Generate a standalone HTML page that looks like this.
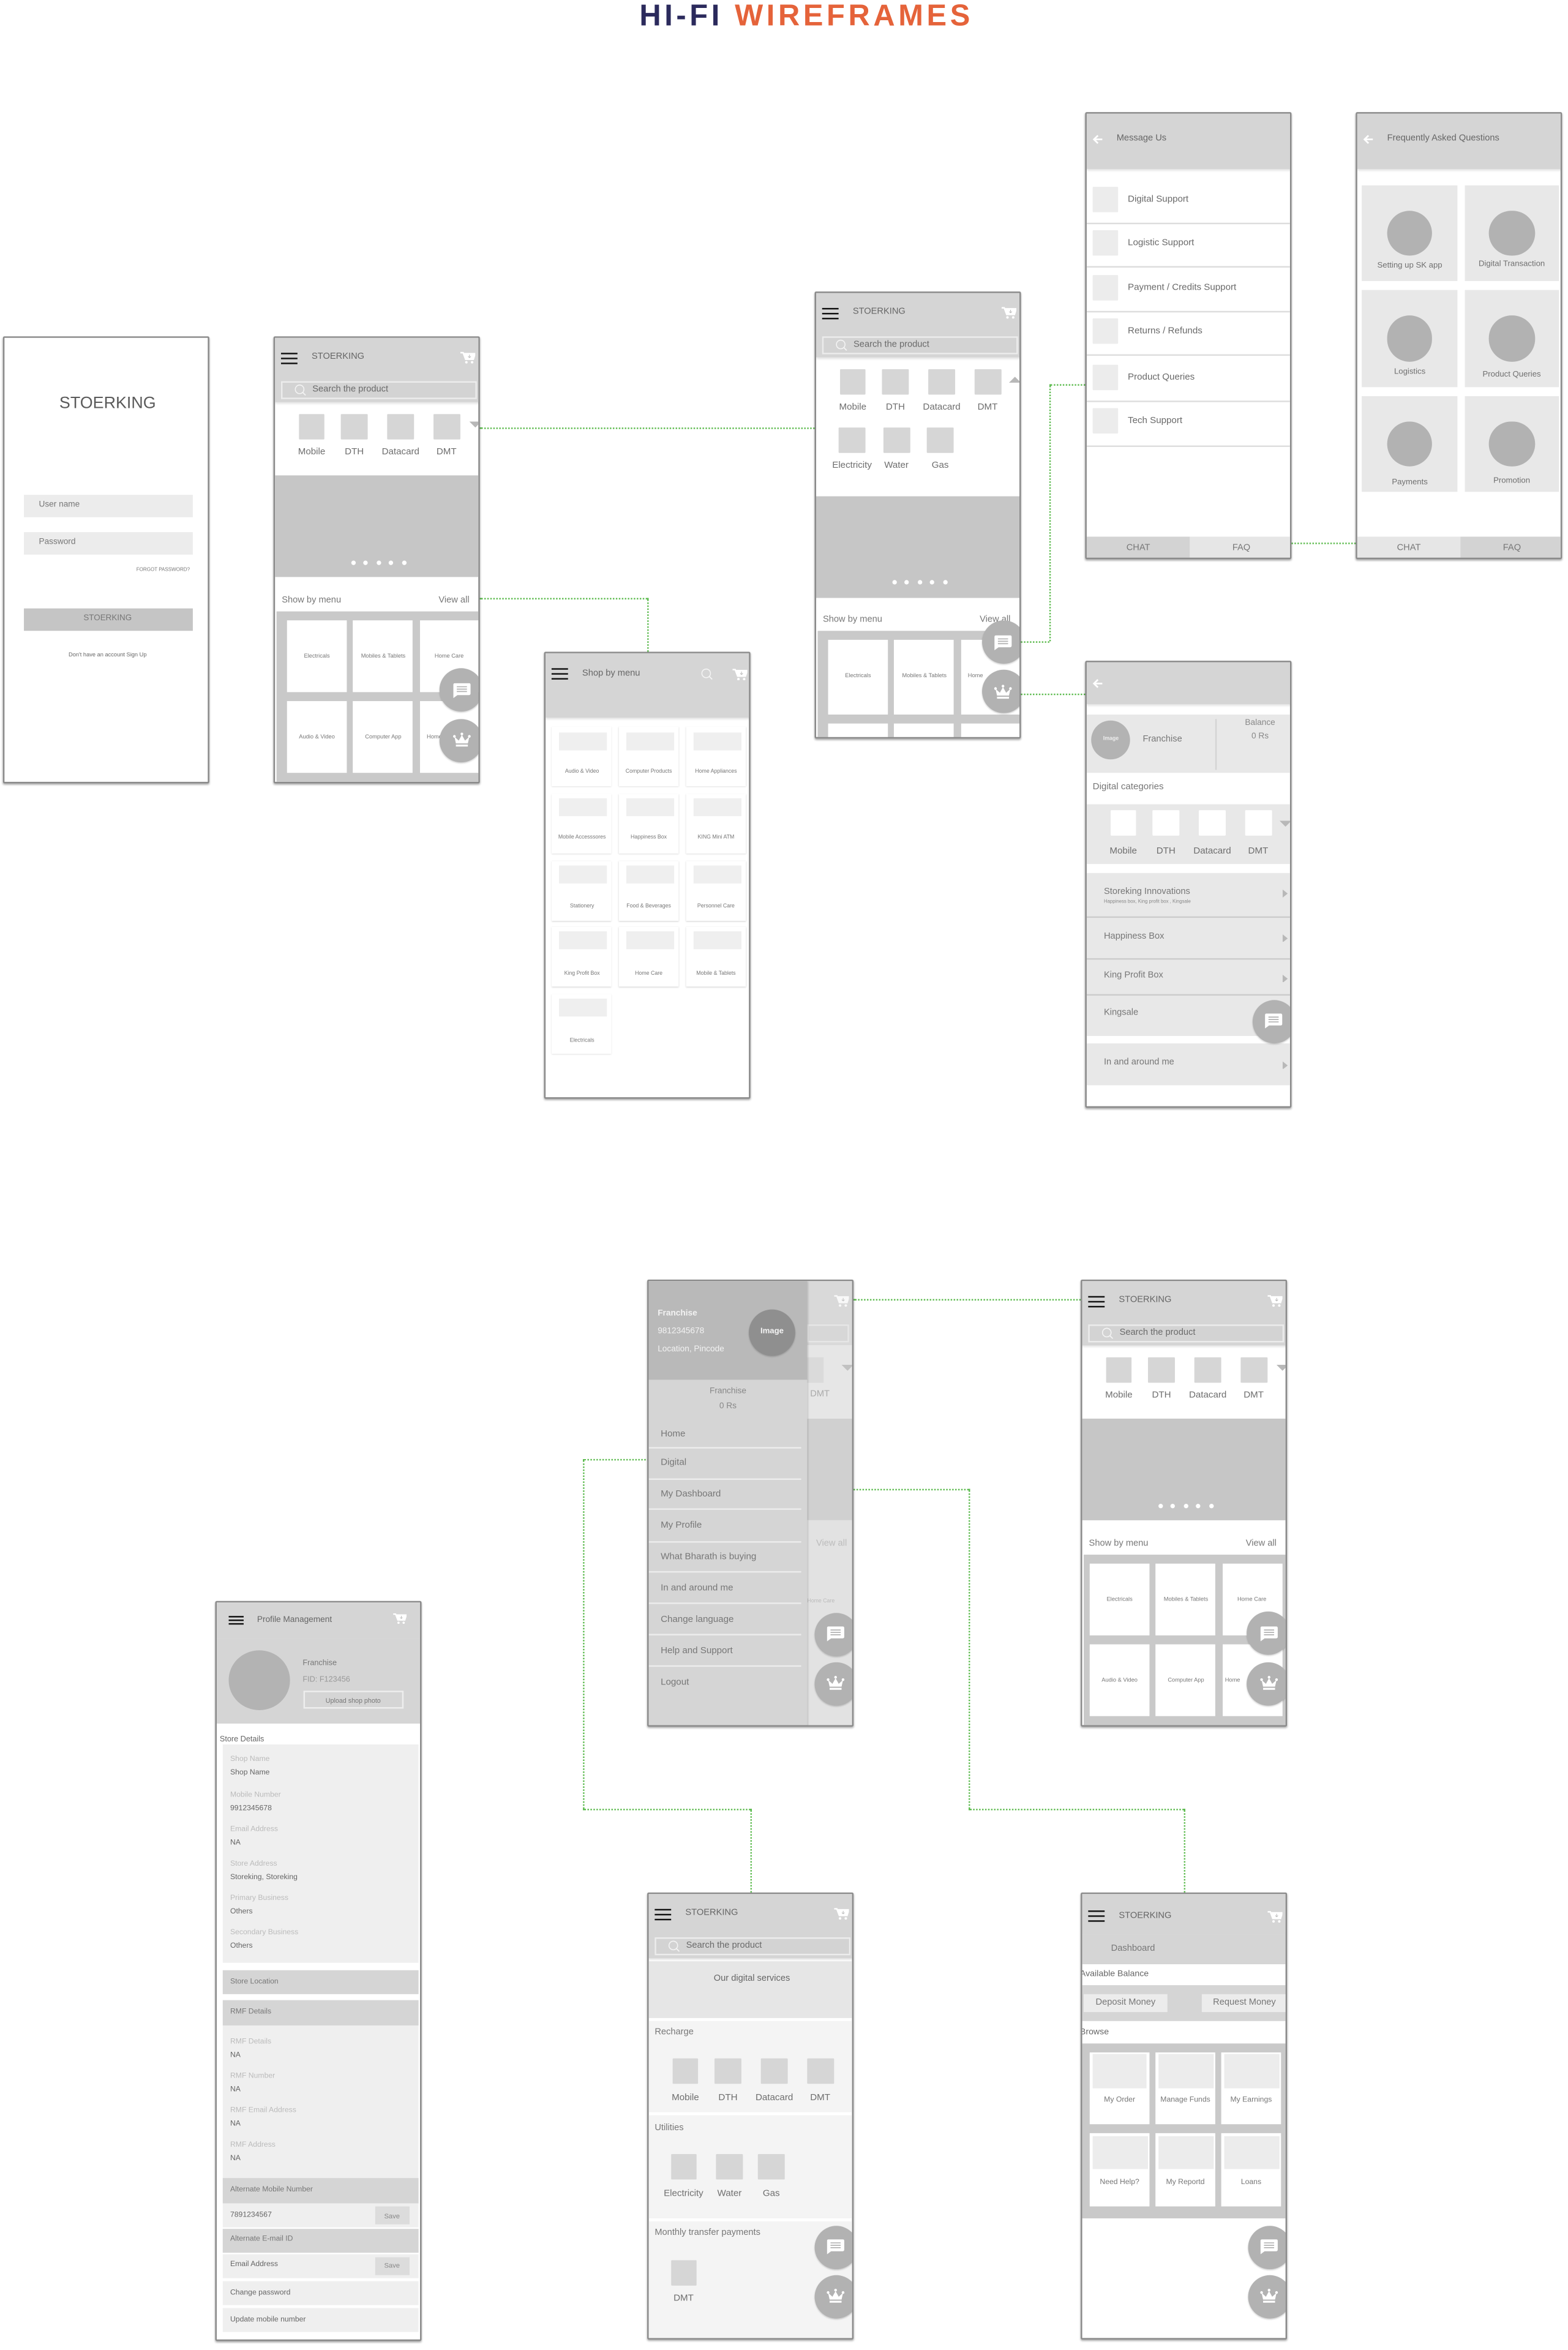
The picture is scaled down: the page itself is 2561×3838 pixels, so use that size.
<!DOCTYPE html>
<html><head><meta charset="utf-8">
<style>
*{box-sizing:border-box;margin:0;padding:0}
html,body{width:2561px;height:3836px;background:#fff;overflow:hidden}
#w{position:absolute;left:0;top:0;width:1049px;height:1572px;transform:scale(2.4414);transform-origin:0 0;font-family:"Liberation Sans",sans-serif;color:#707070}
.a{position:absolute;white-space:nowrap}
.s{position:absolute;width:138px;height:299px;background:#fff;border:0.5px solid #8a8a8a;box-shadow:0 0.8px 1.2px rgba(0,0,0,.35);overflow:hidden;border-radius:1px}
.hdr{position:absolute;left:0;top:0;width:138px;height:43px;background:#d5d5d5;box-shadow:0 1px 1.5px rgba(0,0,0,.12)}
.hb{position:absolute;left:4px;top:9.5px;width:10.5px;height:0.9px;background:#111;box-shadow:0 3.3px 0 #111,0 6.6px 0 #111}
.tt{position:absolute;font-size:6px;color:#666;top:10px;left:24.5px;white-space:nowrap}
.srch{position:absolute;left:4px;top:28.5px;width:130.5px;height:12px;border:0.5px solid #ececec;background:#d3d3d3}
.srch span{position:absolute;left:20px;top:2px;font-size:6px;color:#6a6a6a;white-space:nowrap}
.sq{position:absolute;width:17.5px;height:17px;background:#d6d6d6;border-radius:.5px}
.lb{position:absolute;width:34px;text-align:center;font-size:6.2px;color:#6e6e6e;white-space:nowrap}
.ban{position:absolute;left:0;top:92px;width:138px;height:68px;background:#c6c6c6}
.dot{position:absolute;top:148.5px;width:3px;height:3px;border-radius:50%;background:#fff}
.grid{position:absolute;left:0.5px;top:183px;width:137px;height:120px;background:#c9c9c9}
.tile{position:absolute;background:#fff;font-size:3.8px;color:#777;text-align:center;white-space:nowrap}
.fab{position:absolute;width:29px;height:29px;border-radius:50%;background:#b2b2b2;box-shadow:0 .6px 1px rgba(0,0,0,.2)}
.fab svg{position:absolute;left:8.5px;top:9.5px;width:12px;height:10px}
.cart{position:absolute;width:10px;height:8.5px}
.g{position:absolute;border-color:#5dbb4f;border-style:dotted;border-width:0}
.h{border-top-width:.55px}
.v{border-left-width:.55px}
.row{position:absolute;font-size:6.2px;color:#6a6a6a;white-space:nowrap}
.st{font-size:3.6px}
</style></head><body><div id="w">

<div class="a" style="left:0;width:1079px;top:0px;text-align:center;font-size:20px;font-weight:bold;letter-spacing:2.3px"><span style="color:#2b2a5c">HI-FI </span><span style="color:#e5633a">WIREFRAMES</span></div>

<div class="g h" style="left:321px;top:286px;width:224px"></div>
<div class="g h" style="left:321px;top:400px;width:112px"></div>
<div class="g v" style="left:433px;top:400px;height:36px"></div>
<div class="g h" style="left:683px;top:429px;width:19px"></div>
<div class="g v" style="left:702px;top:257px;height:172px"></div>
<div class="g h" style="left:702px;top:257px;width:24px"></div>
<div class="g h" style="left:683px;top:464px;width:43px"></div>
<div class="g h" style="left:864px;top:363px;width:43px"></div>
<div class="g h" style="left:571px;top:869px;width:152px"></div>
<div class="g h" style="left:390px;top:976px;width:50px"></div>
<div class="g v" style="left:390px;top:976px;height:234px"></div>
<div class="g h" style="left:390px;top:1210px;width:112px"></div>
<div class="g v" style="left:502px;top:1210px;height:56px"></div>
<div class="g h" style="left:539px;top:996px;width:109px"></div>
<div class="g v" style="left:648px;top:996px;height:214px"></div>
<div class="g h" style="left:648px;top:1210px;width:144px"></div>
<div class="g v" style="left:792px;top:1210px;height:56px"></div>

<svg width="0" height="0" style="position:absolute">
<defs>
<symbol id="cart" viewBox="0 0 12 10"><path d="M0 1h2.2l2 5.3h6.2l1.4-4.5H3" fill="none" stroke="#fff" stroke-width="1.2"/><path d="M2.9 1.8h8.9l-1.4 4.5H4.3z" fill="#fff"/><path d="M7.3 2.6v2.4M6.2 4l1.1 1 1.1-1" stroke="#bbb" stroke-width=".5" fill="none"/><circle cx="4.8" cy="8.7" r="1" fill="#fff"/><circle cx="9.4" cy="8.7" r="1" fill="#fff"/></symbol>
<symbol id="chat" viewBox="0 0 12 10"><path d="M1.2 0h9.6a1 1 0 0 1 1 1v6a1 1 0 0 1-1 1H3L.3 10V1a1 1 0 0 1 .9-1z" fill="#fff"/><path d="M2.6 2.4h6.8M2.6 4h6.8M2.6 5.6h6.8" stroke="#b2b2b2" stroke-width=".7"/></symbol>
<symbol id="crown" viewBox="0 0 12 10"><circle cx="1" cy="2.6" r=".9" fill="#fff"/><circle cx="6" cy="1" r=".9" fill="#fff"/><circle cx="11" cy="2.6" r=".9" fill="#fff"/><path d="M1 2.8l2.9 2.6L6 1.6l2.1 3.8L11 2.8 10 7.3H2z" fill="#fff"/><rect x="2" y="8.1" width="8" height="1.3" fill="#fff"/></symbol>
<symbol id="mag" viewBox="0 0 10 10"><circle cx="4.3" cy="4.3" r="3.6" fill="none" stroke="#f4f4f4" stroke-width=".8"/><path d="M6.9 6.9l2.4 2.4" stroke="#f4f4f4" stroke-width=".9"/></symbol>
<symbol id="back" viewBox="0 0 10 9"><path d="M5 .8L1.2 4.5 5 8.2M1.2 4.5h8" fill="none" stroke="#fff" stroke-width="1.6"/></symbol>
<symbol id="tri" viewBox="0 0 10 5"><path d="M0 0h10L5 5z" fill="#b8b8b8"/></symbol>
<symbol id="rtri" viewBox="0 0 5 8"><path d="M0 0l5 4-5 4z" fill="#b8b8b8"/></symbol>
</defs></svg>

<!-- LOGIN -->
<div class="s" style="left:2px;top:225px">
<div class="a" style="left:0;width:138px;text-align:center;top:38px;font-size:11px;color:#5a5a5a">STOERKING</div>
<div class="a" style="left:12.5px;top:105px;width:113px;height:15px;background:#ececec;font-size:5.6px;color:#777;padding:4.2px 0 0 10.5px">User name</div>
<div class="a" style="left:12.5px;top:130px;width:113px;height:15px;background:#ececec;font-size:5.6px;color:#777;padding:4.2px 0 0 10.5px">Password</div>
<div class="a" style="right:12px;top:153px;font-size:3.3px;color:#777">FORGOT PASSWORD?</div>
<div class="a" style="left:12.5px;top:181px;width:113px;height:15px;background:#c5c5c5;font-size:5.5px;color:#777;text-align:center;padding-top:4.2px">STOERKING</div>
<div class="a" style="left:0;width:138px;text-align:center;top:209.5px;font-size:3.8px;color:#666">Don't have an account Sign Up</div>
</div>

<!-- HOME 1 -->
<div class="s" style="left:183px;top:225px">
<div class="hdr"></div><div class="hb"></div><div class="tt">STOERKING</div>
<svg class="cart" style="left:124px;top:9px"><use href="#cart"/></svg>
<div class="srch"><svg class="a" style="left:8px;top:1.5px;width:8px;height:8px"><use href="#mag"/></svg><span>Search the product</span></div>
<div class="sq" style="left:15.7px;top:51px"></div><div class="sq" style="left:44.3px;top:51px"></div><div class="sq" style="left:75.3px;top:51px"></div><div class="sq" style="left:106px;top:51px"></div>
<div class="lb" style="left:7.5px;top:72.5px">Mobile</div><div class="lb" style="left:36px;top:72.5px">DTH</div><div class="lb" style="left:67px;top:72.5px">Datacard</div><div class="lb" style="left:97.7px;top:72.5px">DMT</div>
<svg class="a" style="left:129.5px;top:56px;width:8px;height:4px"><use href="#tri"/></svg>
<div class="ban"></div>
<div class="dot" style="left:50.9px"></div><div class="dot" style="left:59.3px"></div><div class="dot" style="left:67.8px"></div><div class="dot" style="left:76.3px"></div><div class="dot" style="left:84.8px"></div>
<div class="a" style="left:4.5px;top:172.5px;font-size:6px;color:#777">Show by menu</div>
<div class="a" style="right:6px;top:172.5px;font-size:6px;color:#777">View all</div>
<div class="grid"></div>
<div class="tile" style="left:8px;top:189px;width:40px;height:48px;padding-top:21.5px">Electricals</div>
<div class="tile" style="left:52.4px;top:189px;width:40px;height:48px;padding-top:21.5px">Mobiles &amp; Tablets</div>
<div class="tile" style="left:96.5px;top:189px;width:40px;height:48px;padding-top:21.5px">Home Care</div>
<div class="tile" style="left:8px;top:243px;width:40px;height:48px;padding-top:21.5px">Audio &amp; Video</div>
<div class="tile" style="left:52.4px;top:243px;width:40px;height:48px;padding-top:21.5px">Computer App</div>
<div class="tile" style="left:96.5px;top:243px;width:40px;height:48px;padding-top:21.5px;text-align:left;padding-left:5px">Home</div>
<div class="fab" style="left:110px;top:221px"><svg><use href="#chat"/></svg></div>
<div class="fab" style="left:110px;top:254.5px"><svg><use href="#crown"/></svg></div>
</div>

<!-- SHOP BY MENU -->
<div class="s" style="left:364px;top:436px">
<div class="hdr"></div><div class="hb"></div><div class="tt" style="top:10.5px">Shop by menu</div>
<svg class="a" style="left:104px;top:9.5px;width:8px;height:8px"><use href="#mag"/></svg>
<svg class="cart" style="left:124.5px;top:9.5px"><use href="#cart"/></svg>
<div class="tile" style="left:4.4px;top:49px;width:40px;height:40px;box-shadow:0 .4px 1px rgba(0,0,0,.18)"><div class="a" style="left:4.5px;top:4px;width:32px;height:12px;background:#efefef"></div><div class="a st" style="left:0;width:40px;top:28px">Audio &amp; Video</div></div>
<div class="tile" style="left:49px;top:49px;width:40px;height:40px;box-shadow:0 .4px 1px rgba(0,0,0,.18)"><div class="a" style="left:4.5px;top:4px;width:32px;height:12px;background:#efefef"></div><div class="a st" style="left:0;width:40px;top:28px">Computer Products</div></div>
<div class="tile" style="left:94px;top:49px;width:40px;height:40px;box-shadow:0 .4px 1px rgba(0,0,0,.18)"><div class="a" style="left:4.5px;top:4px;width:32px;height:12px;background:#efefef"></div><div class="a st" style="left:0;width:40px;top:28px">Home Appliances</div></div>
<div class="tile" style="left:4.4px;top:94px;width:40px;height:40px;box-shadow:0 .4px 1px rgba(0,0,0,.18)"><div class="a" style="left:4.5px;top:2.5px;width:32px;height:12px;background:#efefef"></div><div class="a st" style="left:0;width:40px;top:27px">Mobile Accesssores</div></div>
<div class="tile" style="left:49px;top:94px;width:40px;height:40px;box-shadow:0 .4px 1px rgba(0,0,0,.18)"><div class="a" style="left:4.5px;top:2.5px;width:32px;height:12px;background:#efefef"></div><div class="a st" style="left:0;width:40px;top:27px">Happiness Box</div></div>
<div class="tile" style="left:94px;top:94px;width:40px;height:40px;box-shadow:0 .4px 1px rgba(0,0,0,.18)"><div class="a" style="left:4.5px;top:2.5px;width:32px;height:12px;background:#efefef"></div><div class="a st" style="left:0;width:40px;top:27px">KING Mini ATM</div></div>
<div class="tile" style="left:4.4px;top:138.5px;width:40px;height:40px;box-shadow:0 .4px 1px rgba(0,0,0,.18)"><div class="a" style="left:4.5px;top:3px;width:32px;height:12px;background:#efefef"></div><div class="a st" style="left:0;width:40px;top:28px">Stationery</div></div>
<div class="tile" style="left:49px;top:138.5px;width:40px;height:40px;box-shadow:0 .4px 1px rgba(0,0,0,.18)"><div class="a" style="left:4.5px;top:3px;width:32px;height:12px;background:#efefef"></div><div class="a st" style="left:0;width:40px;top:28px">Food &amp; Beverages</div></div>
<div class="tile" style="left:94px;top:138.5px;width:40px;height:40px;box-shadow:0 .4px 1px rgba(0,0,0,.18)"><div class="a" style="left:4.5px;top:3px;width:32px;height:12px;background:#efefef"></div><div class="a st" style="left:0;width:40px;top:28px">Personnel Care</div></div>
<div class="tile" style="left:4.4px;top:183px;width:40px;height:40px;box-shadow:0 .4px 1px rgba(0,0,0,.18)"><div class="a" style="left:4.5px;top:2.5px;width:32px;height:12px;background:#efefef"></div><div class="a st" style="left:0;width:40px;top:29px">King Profit Box</div></div>
<div class="tile" style="left:49px;top:183px;width:40px;height:40px;box-shadow:0 .4px 1px rgba(0,0,0,.18)"><div class="a" style="left:4.5px;top:2.5px;width:32px;height:12px;background:#efefef"></div><div class="a st" style="left:0;width:40px;top:29px">Home Care</div></div>
<div class="tile" style="left:94px;top:183px;width:40px;height:40px;box-shadow:0 .4px 1px rgba(0,0,0,.18)"><div class="a" style="left:4.5px;top:2.5px;width:32px;height:12px;background:#efefef"></div><div class="a st" style="left:0;width:40px;top:29px">Mobile &amp; Tablets</div></div>
<div class="tile" style="left:4.4px;top:228px;width:40px;height:40px;box-shadow:0 .4px 1px rgba(0,0,0,.18)"><div class="a" style="left:4.5px;top:2.5px;width:32px;height:12px;background:#efefef"></div><div class="a st" style="left:0;width:40px;top:29px">Electricals</div></div>
</div>

<!-- HOME 2 expanded -->
<div class="s" style="left:545px;top:195px">
<div class="hdr"></div><div class="hb"></div><div class="tt">STOERKING</div>
<svg class="cart" style="left:124px;top:9px"><use href="#cart"/></svg>
<div class="srch"><svg class="a" style="left:8px;top:1.5px;width:8px;height:8px"><use href="#mag"/></svg><span>Search the product</span></div>
<div class="sq" style="left:15.7px;top:51px"></div><div class="sq" style="left:44.3px;top:51px"></div><div class="sq" style="left:75.3px;top:51px"></div><div class="sq" style="left:106px;top:51px"></div>
<div class="lb" style="left:7.5px;top:72.5px">Mobile</div><div class="lb" style="left:36px;top:72.5px">DTH</div><div class="lb" style="left:67px;top:72.5px">Datacard</div><div class="lb" style="left:97.7px;top:72.5px">DMT</div>
<svg class="a" style="left:129px;top:56px;width:8px;height:4px;transform:rotate(180deg)"><use href="#tri"/></svg>
<div class="sq" style="left:15px;top:90px"></div><div class="sq" style="left:45px;top:90px"></div><div class="sq" style="left:74px;top:90px"></div>
<div class="lb" style="left:7px;top:112px">Electricity</div><div class="lb" style="left:36.7px;top:112px">Water</div><div class="lb" style="left:66px;top:112px">Gas</div>
<div class="ban" style="top:136px"></div>
<div class="dot" style="left:50.9px;top:191.5px"></div><div class="dot" style="left:59.3px;top:191.5px"></div><div class="dot" style="left:67.8px;top:191.5px"></div><div class="dot" style="left:76.3px;top:191.5px"></div><div class="dot" style="left:84.8px;top:191.5px"></div>
<div class="a" style="left:4.5px;top:215.5px;font-size:6px;color:#777">Show by menu</div>
<div class="a" style="right:6px;top:215.5px;font-size:6px;color:#777">View all</div>
<div class="grid" style="top:226px"></div>
<div class="tile" style="left:8px;top:232px;width:40px;height:50px;padding-top:22px">Electricals</div>
<div class="tile" style="left:52.4px;top:232px;width:40px;height:50px;padding-top:22px">Mobiles &amp; Tablets</div>
<div class="tile" style="left:96.5px;top:232px;width:40px;height:50px;padding-top:22px;text-align:left;padding-left:5px">Home</div>
<div class="tile" style="left:8px;top:288px;width:40px;height:20px"></div>
<div class="tile" style="left:52.4px;top:288px;width:40px;height:20px"></div>
<div class="tile" style="left:96.5px;top:288px;width:40px;height:20px"></div>
<div class="fab" style="left:110.5px;top:219px"><svg><use href="#chat"/></svg></div>
<div class="fab" style="left:110.5px;top:252px"><svg><use href="#crown"/></svg></div>
</div>

<!-- MESSAGE US -->
<div class="s" style="left:726px;top:75px">
<div class="hdr" style="height:36.5px"></div>
<svg class="a" style="left:3.5px;top:14px;width:7px;height:6.5px"><use href="#back"/></svg>
<div class="a" style="left:20px;top:14.3px;font-size:6px;color:#666">Message Us</div>
<div class="sq" style="left:3.8px;top:49px;background:#ececec"></div><div class="row" style="left:27.5px;top:54px">Digital Support</div><div class="a" style="left:0;top:72.5px;width:138px;height:.6px;background:#ddd"></div>
<div class="sq" style="left:3.8px;top:78px;background:#ececec"></div><div class="row" style="left:27.5px;top:83px">Logistic Support</div><div class="a" style="left:0;top:102px;width:138px;height:.6px;background:#ddd"></div>
<div class="sq" style="left:3.8px;top:107.5px;background:#ececec"></div><div class="row" style="left:27.5px;top:112.5px">Payment / Credits Support</div><div class="a" style="left:0;top:131.5px;width:138px;height:.6px;background:#ddd"></div>
<div class="sq" style="left:3.8px;top:137px;background:#ececec"></div><div class="row" style="left:27.5px;top:141.5px">Returns / Refunds</div><div class="a" style="left:0;top:161px;width:138px;height:.6px;background:#ddd"></div>
<div class="sq" style="left:3.8px;top:168px;background:#ececec"></div><div class="row" style="left:27.5px;top:172.5px">Product Queries</div><div class="a" style="left:0;top:192px;width:138px;height:.6px;background:#ddd"></div>
<div class="sq" style="left:3.8px;top:197px;background:#ececec"></div><div class="row" style="left:27.5px;top:202px">Tech Support</div><div class="a" style="left:0;top:221.5px;width:138px;height:.6px;background:#ddd"></div>
<div class="a" style="left:0;top:283px;width:69px;height:17px;background:#d3d3d3;font-size:6px;text-align:center;padding-top:5px;color:#777">CHAT</div>
<div class="a" style="left:69px;top:283px;width:69px;height:17px;background:#e6e6e6;font-size:6px;text-align:center;padding-top:5px;color:#777">FAQ</div>
</div>

<!-- FAQ -->
<div class="s" style="left:907px;top:75px">
<div class="hdr" style="height:36.5px"></div>
<svg class="a" style="left:3.5px;top:14px;width:7px;height:6.5px"><use href="#back"/></svg>
<div class="a" style="left:20px;top:14.3px;font-size:6px;color:#666">Frequently Asked Questions</div>
<div class="a" style="left:3.4px;top:47.5px;width:63.5px;height:64.5px;background:#e8e8e8"><div class="a" style="left:16.5px;top:17px;width:30.5px;height:30.5px;border-radius:50%;background:#b2b2b2"></div><div class="a" style="left:0;width:63.5px;text-align:center;top:51.5px;font-size:5.4px">Setting up SK app</div></div>
<div class="a" style="left:71.6px;top:47.5px;width:63.5px;height:64.5px;background:#e8e8e8"><div class="a" style="left:16.5px;top:17px;width:30.5px;height:30.5px;border-radius:50%;background:#b2b2b2"></div><div class="a" style="left:0;width:63.5px;text-align:center;top:50.5px;font-size:5.4px">Digital Transaction</div></div>
<div class="a" style="left:3.4px;top:118px;width:63.5px;height:64.5px;background:#e8e8e8"><div class="a" style="left:16.5px;top:17px;width:30.5px;height:30.5px;border-radius:50%;background:#b2b2b2"></div><div class="a" style="left:0;width:63.5px;text-align:center;top:51.5px;font-size:5.4px">Logistics</div></div>
<div class="a" style="left:71.6px;top:118px;width:63.5px;height:64.5px;background:#e8e8e8"><div class="a" style="left:16.5px;top:17px;width:30.5px;height:30.5px;border-radius:50%;background:#b2b2b2"></div><div class="a" style="left:0;width:63.5px;text-align:center;top:54px;font-size:5.4px">Product Queries</div></div>
<div class="a" style="left:3.4px;top:188.5px;width:63.5px;height:64.5px;background:#e8e8e8"><div class="a" style="left:16.5px;top:17px;width:30.5px;height:30.5px;border-radius:50%;background:#b2b2b2"></div><div class="a" style="left:0;width:63.5px;text-align:center;top:55px;font-size:5.4px">Payments</div></div>
<div class="a" style="left:71.6px;top:188.5px;width:63.5px;height:64.5px;background:#e8e8e8"><div class="a" style="left:16.5px;top:17px;width:30.5px;height:30.5px;border-radius:50%;background:#b2b2b2"></div><div class="a" style="left:0;width:63.5px;text-align:center;top:54.5px;font-size:5.4px">Promotion</div></div>
<div class="a" style="left:0;top:283px;width:69px;height:17px;background:#e6e6e6;font-size:6px;text-align:center;padding-top:5px;color:#777">CHAT</div>
<div class="a" style="left:69px;top:283px;width:69px;height:17px;background:#d3d3d3;font-size:6px;text-align:center;padding-top:5px;color:#777">FAQ</div>
</div>

<!-- DIGITAL PROFILE -->
<div class="s" style="left:726px;top:442px">
<div class="hdr" style="height:28px"></div>
<svg class="a" style="left:3.5px;top:11px;width:7px;height:6.5px"><use href="#back"/></svg>
<div class="a" style="left:0;top:35px;width:138px;height:38.5px;background:#e8e8e8"></div>
<div class="a" style="left:3.3px;top:39px;width:25.8px;height:26px;border-radius:50%;background:#b3b3b3;font-size:3.6px;color:#eee;text-align:center;padding-top:10px;font-weight:bold">Image</div>
<div class="a" style="left:37.5px;top:48.5px;font-size:6px;color:#777">Franchise</div>
<div class="a" style="left:86px;top:38px;width:.5px;height:34px;background:#d4d4d4"></div>
<div class="a" style="left:96px;width:40px;text-align:center;top:37.5px;font-size:5.6px;color:#888">Balance</div>
<div class="a" style="left:96px;width:40px;text-align:center;top:46.5px;font-size:5.6px;color:#888">0 Rs</div>
<div class="a" style="left:4px;top:79.5px;font-size:6.2px;color:#777">Digital categories</div>
<div class="a" style="left:0;top:95px;width:138px;height:39.5px;background:#e8e8e8"></div>
<div class="sq" style="left:15.7px;top:99px;background:#fff"></div><div class="sq" style="left:44.3px;top:99px;background:#fff"></div><div class="sq" style="left:75.3px;top:99px;background:#fff"></div><div class="sq" style="left:106px;top:99px;background:#fff"></div>
<div class="lb" style="left:7.5px;top:122.5px">Mobile</div><div class="lb" style="left:36px;top:122.5px">DTH</div><div class="lb" style="left:67px;top:122.5px">Datacard</div><div class="lb" style="left:97.7px;top:122.5px">DMT</div>
<svg class="a" style="left:129px;top:105.5px;width:8px;height:4px"><use href="#tri"/></svg>
<div class="a" style="left:0;top:141px;width:138px;height:109px;background:#e8e8e8"></div>
<div class="a" style="left:0;top:170px;width:138px;height:.6px;background:#ccc"></div>
<div class="a" style="left:0;top:198px;width:138px;height:.6px;background:#ccc"></div>
<div class="a" style="left:0;top:222px;width:138px;height:.6px;background:#ccc"></div>
<div class="a" style="left:11.5px;top:150.5px;font-size:6px;color:#777">Storeking Innovations</div>
<div class="a" style="left:11.5px;top:158.3px;font-size:3.2px;color:#888">Happiness box, King profit box , Kingsale</div>
<div class="a" style="left:11.5px;top:180.5px;font-size:6px;color:#777">Happiness Box</div>
<div class="a" style="left:11.5px;top:207px;font-size:6px;color:#777">King Profit Box</div>
<div class="a" style="left:11.5px;top:232px;font-size:6px;color:#777">Kingsale</div>
<div class="a" style="left:0;top:255px;width:138px;height:27.5px;background:#e8e8e8"></div>
<div class="a" style="left:11.5px;top:265px;font-size:6px;color:#777">In and around me</div>
<svg class="a" style="left:131px;top:152px;width:3.5px;height:5.5px"><use href="#rtri"/></svg>
<svg class="a" style="left:131px;top:181.5px;width:3.5px;height:5.5px"><use href="#rtri"/></svg>
<svg class="a" style="left:131px;top:208.5px;width:3.5px;height:5.5px"><use href="#rtri"/></svg>
<svg class="a" style="left:131px;top:266.5px;width:3.5px;height:5.5px"><use href="#rtri"/></svg>
<div class="fab" style="left:110.5px;top:225.5px"><svg><use href="#chat"/></svg></div>
</div>

<!-- DRAWER -->
<div class="s" style="left:433px;top:856px">
<div class="a" style="left:0;top:0;width:138px;height:43px;background:#d9d9d9"></div>
<svg class="cart" style="left:124px;top:9px;opacity:.8"><use href="#cart"/></svg>
<div class="a" style="left:106px;top:28.5px;width:28px;height:12px;border:.5px solid #e6e6e6;background:#d7d7d7"></div>
<div class="a" style="left:106px;top:43px;width:32px;height:49px;background:#e6e6e6"></div>
<div class="a" style="left:106px;top:51px;width:11px;height:17px;background:#dadada"></div>
<svg class="a" style="left:129px;top:56px;width:8px;height:4px;opacity:.8"><use href="#tri"/></svg>
<div class="a" style="left:108px;top:72.5px;font-size:6px;color:#aaa">DMT</div>
<div class="a" style="left:106px;top:92px;width:32px;height:68px;background:#d0d0d0"></div>
<div class="a" style="left:106px;top:160px;width:32px;height:140px;background:#e2e2e2"></div>
<div class="a" style="left:112px;top:172.5px;font-size:6px;color:#bbb">View all</div>
<div class="a" style="left:106px;top:212px;font-size:3.6px;color:#bbb">Home Care</div>
<div class="fab" style="left:110.5px;top:221.5px"><svg><use href="#chat"/></svg></div>
<div class="fab" style="left:110.5px;top:254.5px"><svg><use href="#crown"/></svg></div>
<div class="a" style="left:0;top:0;width:106px;height:300px;background:#d5d5d5;box-shadow:.6px 0 1px rgba(0,0,0,.15)"></div>
<div class="a" style="left:0;top:0;width:106px;height:66px;background:#b9b9b9"></div>
<div class="a" style="left:6px;top:18.5px;font-size:5.6px;color:#f2f2f2;font-weight:bold">Franchise</div>
<div class="a" style="left:6px;top:30.5px;font-size:5.6px;color:#f2f2f2">9812345678</div>
<div class="a" style="left:6px;top:42.5px;font-size:5.6px;color:#f2f2f2">Location, Pincode</div>
<div class="a" style="left:67px;top:19px;width:31px;height:31px;border-radius:50%;background:#8f8f8f;font-size:5.4px;color:#f4f4f4;font-weight:bold;text-align:center;padding-top:12px;box-shadow:0 .6px 1px rgba(0,0,0,.2)">Image</div>
<div class="a" style="left:0;width:106px;text-align:center;top:70.5px;font-size:5.6px;color:#888">Franchise</div>
<div class="a" style="left:0;width:106px;text-align:center;top:80.5px;font-size:5.6px;color:#888">0 Rs</div>
<div class="a" style="left:8px;top:98.5px;font-size:6.2px;color:#777">Home</div>
<div class="a" style="left:8px;top:117.5px;font-size:6.2px;color:#777">Digital</div>
<div class="a" style="left:8px;top:138.5px;font-size:6.2px;color:#777">My Dashboard</div>
<div class="a" style="left:8px;top:159.5px;font-size:6.2px;color:#777">My Profile</div>
<div class="a" style="left:8px;top:180.5px;font-size:6.2px;color:#777">What Bharath is buying</div>
<div class="a" style="left:8px;top:201.5px;font-size:6.2px;color:#777">In and around me</div>
<div class="a" style="left:8px;top:222.5px;font-size:6.2px;color:#777">Change language</div>
<div class="a" style="left:8px;top:243.5px;font-size:6.2px;color:#777">Help and Support</div>
<div class="a" style="left:8px;top:264.5px;font-size:6.2px;color:#777">Logout</div>
<div class="a" style="left:0;top:111px;width:102px;height:.6px;background:#ececec"></div>
<div class="a" style="left:0;top:131.5px;width:102px;height:.6px;background:#ececec"></div>
<div class="a" style="left:0;top:152px;width:102px;height:.6px;background:#ececec"></div>
<div class="a" style="left:0;top:173.5px;width:102px;height:.6px;background:#ececec"></div>
<div class="a" style="left:0;top:194px;width:102px;height:.6px;background:#ececec"></div>
<div class="a" style="left:0;top:215px;width:102px;height:.6px;background:#ececec"></div>
<div class="a" style="left:0;top:235.5px;width:102px;height:.6px;background:#ececec"></div>
<div class="a" style="left:0;top:256.5px;width:102px;height:.6px;background:#ececec"></div>
</div>

<!-- HOME 3 -->
<div class="s" style="left:723px;top:856px">
<div class="hdr"></div><div class="hb"></div><div class="tt">STOERKING</div>
<svg class="cart" style="left:124px;top:9px"><use href="#cart"/></svg>
<div class="srch"><svg class="a" style="left:8px;top:1.5px;width:8px;height:8px"><use href="#mag"/></svg><span>Search the product</span></div>
<div class="sq" style="left:15.7px;top:51px"></div><div class="sq" style="left:44.3px;top:51px"></div><div class="sq" style="left:75.3px;top:51px"></div><div class="sq" style="left:106px;top:51px"></div>
<div class="lb" style="left:7.5px;top:72.5px">Mobile</div><div class="lb" style="left:36px;top:72.5px">DTH</div><div class="lb" style="left:67px;top:72.5px">Datacard</div><div class="lb" style="left:97.7px;top:72.5px">DMT</div>
<svg class="a" style="left:129.5px;top:56px;width:8px;height:4px"><use href="#tri"/></svg>
<div class="ban"></div>
<div class="dot" style="left:50.9px"></div><div class="dot" style="left:59.3px"></div><div class="dot" style="left:67.8px"></div><div class="dot" style="left:76.3px"></div><div class="dot" style="left:84.8px"></div>
<div class="a" style="left:4.5px;top:172.5px;font-size:6px;color:#777">Show by menu</div>
<div class="a" style="right:6px;top:172.5px;font-size:6px;color:#777">View all</div>
<div class="grid"></div>
<div class="tile" style="left:5px;top:189px;width:40px;height:48px;padding-top:21.5px">Electricals</div>
<div class="tile" style="left:49.4px;top:189px;width:40px;height:48px;padding-top:21.5px">Mobiles &amp; Tablets</div>
<div class="tile" style="left:93.5px;top:189px;width:40px;height:48px;padding-top:21.5px">Home Care</div>
<div class="tile" style="left:5px;top:243px;width:40px;height:48px;padding-top:21.5px">Audio &amp; Video</div>
<div class="tile" style="left:49.4px;top:243px;width:40px;height:48px;padding-top:21.5px">Computer App</div>
<div class="tile" style="left:93.5px;top:243px;width:40px;height:48px;padding-top:21.5px;text-align:left;padding-left:2px">Home</div>
<div class="fab" style="left:110px;top:221px"><svg><use href="#chat"/></svg></div>
<div class="fab" style="left:110px;top:254.5px"><svg><use href="#crown"/></svg></div>
</div>

<!-- PROFILE -->
<div class="s" style="left:144px;top:1071px;height:495px">
<div class="a" style="left:0;top:0;width:138px;height:24px;background:#d5d5d5;box-shadow:0 .8px 1.2px rgba(0,0,0,.15)"></div>
<div class="hb" style="left:8px;top:8.5px;width:10px;box-shadow:0 2.4px 0 #111,0 4.8px 0 #111;height:.7px"></div>
<div class="a" style="left:27px;top:8.5px;font-size:5.6px;color:#666">Profile Management</div>
<svg class="cart" style="left:118px;top:7px;width:9px;height:7.5px"><use href="#cart"/></svg>
<div class="a" style="left:0;top:24px;width:138px;height:57px;background:#d5d5d5"></div>
<div class="a" style="left:7.8px;top:32px;width:41.5px;height:40px;border-radius:50%;background:#b3b3b3"></div>
<div class="a" style="left:57.5px;top:38px;font-size:5.2px;color:#777">Franchise</div>
<div class="a" style="left:57.5px;top:49px;font-size:5.2px;color:#999">FID: F123456</div>
<div class="a" style="left:58px;top:59px;width:66.5px;height:12px;border:.5px solid #eee;font-size:4.4px;color:#777;text-align:center;padding-top:3px">Upload shop photo</div>
<div class="a" style="left:2px;top:88.5px;font-size:5.2px;color:#666">Store Details</div>
<div class="a" style="left:3.5px;top:95px;width:131.5px;height:146px;background:#efefef"></div>
<div class="a" style="left:9px;top:102px;font-size:5px;color:#bbb">Shop Name</div><div class="a" style="left:9px;top:111px;font-size:5px;color:#666">Shop Name</div>
<div class="a" style="left:9px;top:125.5px;font-size:5px;color:#bbb">Mobile Number</div><div class="a" style="left:9px;top:134.5px;font-size:5px;color:#666">9912345678</div>
<div class="a" style="left:9px;top:148.5px;font-size:5px;color:#bbb">Email Address</div><div class="a" style="left:9px;top:157.5px;font-size:5px;color:#666">NA</div>
<div class="a" style="left:9px;top:171.5px;font-size:5px;color:#bbb">Store Address</div><div class="a" style="left:9px;top:180.5px;font-size:5px;color:#666">Storeking, Storeking</div>
<div class="a" style="left:9px;top:194.5px;font-size:5px;color:#bbb">Primary Business</div><div class="a" style="left:9px;top:203.5px;font-size:5px;color:#666">Others</div>
<div class="a" style="left:9px;top:217.5px;font-size:5px;color:#bbb">Secondary Business</div><div class="a" style="left:9px;top:226.5px;font-size:5px;color:#666">Others</div>
<div class="a" style="left:3.5px;top:246px;width:131.5px;height:16px;background:#d5d5d5;font-size:5px;color:#777;padding:4.8px 0 0 5.5px">Store Location</div>
<div class="a" style="left:3.5px;top:266px;width:131.5px;height:17px;background:#d5d5d5;font-size:5px;color:#777;padding:5.2px 0 0 5.5px">RMF Details</div>
<div class="a" style="left:3.5px;top:283px;width:131.5px;height:102px;background:#efefef"></div>
<div class="a" style="left:9px;top:290.5px;font-size:5px;color:#bbb">RMF Details</div><div class="a" style="left:9px;top:299.5px;font-size:5px;color:#666">NA</div>
<div class="a" style="left:9px;top:313.5px;font-size:5px;color:#bbb">RMF Number</div><div class="a" style="left:9px;top:322.5px;font-size:5px;color:#666">NA</div>
<div class="a" style="left:9px;top:336.5px;font-size:5px;color:#bbb">RMF Email Address</div><div class="a" style="left:9px;top:345.5px;font-size:5px;color:#666">NA</div>
<div class="a" style="left:9px;top:359.5px;font-size:5px;color:#bbb">RMF Address</div><div class="a" style="left:9px;top:368.5px;font-size:5px;color:#666">NA</div>
<div class="a" style="left:3.5px;top:385px;width:131.5px;height:16.5px;background:#d5d5d5;font-size:5px;color:#777;padding:4.8px 0 0 5.5px">Alternate Mobile Number</div>
<div class="a" style="left:3.5px;top:402px;width:131.5px;height:16px;background:#efefef;font-size:5px;color:#666;padding:4.5px 0 0 5.5px">7891234567</div>
<div class="a" style="left:105.5px;top:404px;width:23.5px;height:12px;background:#dcdcdc;font-size:4.6px;color:#888;text-align:center;padding-top:3.5px">Save</div>
<div class="a" style="left:3.5px;top:418.5px;width:131.5px;height:16.5px;background:#d5d5d5;font-size:5px;color:#777;padding:4.8px 0 0 5.5px">Alternate E-mail ID</div>
<div class="a" style="left:3.5px;top:435.5px;width:131.5px;height:16px;background:#efefef;font-size:5px;color:#666;padding:4.5px 0 0 5.5px">Email Address</div>
<div class="a" style="left:105.5px;top:437.5px;width:23.5px;height:12px;background:#dcdcdc;font-size:4.6px;color:#888;text-align:center;padding-top:3.5px">Save</div>
<div class="a" style="left:3.5px;top:454px;width:131.5px;height:16px;background:#efefef;font-size:5px;color:#666;padding:4.8px 0 0 5.5px">Change password</div>
<div class="a" style="left:3.5px;top:472px;width:131.5px;height:16px;background:#efefef;font-size:5px;color:#666;padding:4.8px 0 0 5.5px">Update mobile number</div>
</div>

<!-- DIGITAL SERVICES -->
<div class="s" style="left:433px;top:1266px;background:#fff">
<div class="hdr"></div><div class="hb"></div><div class="tt">STOERKING</div>
<svg class="cart" style="left:124px;top:9px"><use href="#cart"/></svg>
<div class="srch"><svg class="a" style="left:8px;top:1.5px;width:8px;height:8px"><use href="#mag"/></svg><span>Search the product</span></div>
<div class="a" style="left:0;top:45px;width:138px;height:38px;background:#e6e6e6;font-size:6px;text-align:center;padding-top:8.5px;color:#666">Our digital services</div>
<div class="a" style="left:0;top:85px;width:138px;height:61px;background:#f4f4f4"></div>
<div class="a" style="left:4px;top:89.5px;font-size:6px;color:#777">Recharge</div>
<div class="sq" style="left:15.7px;top:110px"></div><div class="sq" style="left:44.3px;top:110px"></div><div class="sq" style="left:75.3px;top:110px"></div><div class="sq" style="left:106px;top:110px"></div>
<div class="lb" style="left:7.5px;top:132.5px">Mobile</div><div class="lb" style="left:36px;top:132.5px">DTH</div><div class="lb" style="left:67px;top:132.5px">Datacard</div><div class="lb" style="left:97.7px;top:132.5px">DMT</div>
<div class="a" style="left:0;top:148px;width:138px;height:69px;background:#f4f4f4"></div>
<div class="a" style="left:4px;top:153.5px;font-size:6px;color:#777">Utilities</div>
<div class="sq" style="left:14.6px;top:174px"></div><div class="sq" style="left:45.3px;top:174px"></div><div class="sq" style="left:73.4px;top:174px"></div>
<div class="lb" style="left:6.3px;top:196.5px">Electricity</div><div class="lb" style="left:37px;top:196.5px">Water</div><div class="lb" style="left:65px;top:196.5px">Gas</div>
<div class="a" style="left:0;top:219px;width:138px;height:81px;background:#f4f4f4"></div>
<div class="a" style="left:4px;top:223.5px;font-size:6px;color:#777">Monthly transfer payments</div>
<div class="sq" style="left:14.6px;top:244.5px"></div>
<div class="lb" style="left:6.3px;top:267px">DMT</div>
<div class="fab" style="left:110.5px;top:221.5px"><svg><use href="#chat"/></svg></div>
<div class="fab" style="left:110.5px;top:254.5px"><svg><use href="#crown"/></svg></div>
</div>

<!-- DASHBOARD -->
<div class="s" style="left:723px;top:1266px">
<div class="hdr" style="height:26.6px"></div><div class="hb" style="top:10.5px"></div><div class="tt" style="top:12.3px">STOERKING</div>
<svg class="cart" style="left:124px;top:11px"><use href="#cart"/></svg>
<div class="a" style="left:0;top:26.6px;width:138px;height:20.4px;background:#d5d5d5"></div>
<div class="a" style="left:19.3px;top:34px;font-size:6px;color:#777">Dashboard</div>
<div class="a" style="left:-1.5px;top:50.5px;font-size:5.8px;color:#666">Available Balance</div>
<div class="a" style="left:0;top:61px;width:138px;height:23.5px;background:#d5d5d5"></div>
<div class="a" style="left:1px;top:66.5px;width:56px;height:12.5px;background:#ececec;font-size:6px;color:#777;text-align:center;padding-top:3px">Deposit Money</div>
<div class="a" style="left:80px;top:66.5px;width:57px;height:12.5px;background:#ececec;font-size:6px;color:#777;text-align:center;padding-top:3px">Request Money</div>
<div class="a" style="left:-1.5px;top:90px;font-size:5.8px;color:#666">Browse</div>
<div class="a" style="left:.4px;top:100px;width:137px;height:117px;background:#c9c9c9"></div>
<div class="tile" style="left:5px;top:105.5px;width:40px;height:48.5px"><div class="a" style="left:1.5px;top:1.5px;width:36.5px;height:22.5px;background:#ececec"></div><div class="a" style="left:0;width:40px;top:29.5px;font-size:5px">My Order</div></div>
<div class="tile" style="left:49px;top:105.5px;width:40px;height:48.5px"><div class="a" style="left:2px;top:1.5px;width:36.5px;height:22.5px;background:#ececec"></div><div class="a" style="left:0;width:40px;top:29.5px;font-size:5px">Manage Funds</div></div>
<div class="tile" style="left:93px;top:105.5px;width:40px;height:48.5px"><div class="a" style="left:2px;top:1.5px;width:36.5px;height:22.5px;background:#ececec"></div><div class="a" style="left:0;width:40px;top:29.5px;font-size:5px">My Earnings</div></div>
<div class="tile" style="left:5px;top:160px;width:40px;height:48.5px"><div class="a" style="left:2.3px;top:1.5px;width:36.5px;height:22.5px;background:#ececec"></div><div class="a" style="left:0;width:40px;top:29.5px;font-size:5px">Need Help?</div></div>
<div class="tile" style="left:49px;top:160px;width:40px;height:48.5px"><div class="a" style="left:2px;top:1.5px;width:36.5px;height:22.5px;background:#ececec"></div><div class="a" style="left:0;width:40px;top:29.5px;font-size:5px">My Reportd</div></div>
<div class="tile" style="left:93px;top:160px;width:40px;height:48.5px"><div class="a" style="left:2px;top:1.5px;width:36.5px;height:22.5px;background:#ececec"></div><div class="a" style="left:0;width:40px;top:29.5px;font-size:5px">Loans</div></div>
<div class="fab" style="left:110.5px;top:221.5px"><svg><use href="#chat"/></svg></div>
<div class="fab" style="left:110.5px;top:254.5px"><svg><use href="#crown"/></svg></div>
</div>

</div></body></html>
